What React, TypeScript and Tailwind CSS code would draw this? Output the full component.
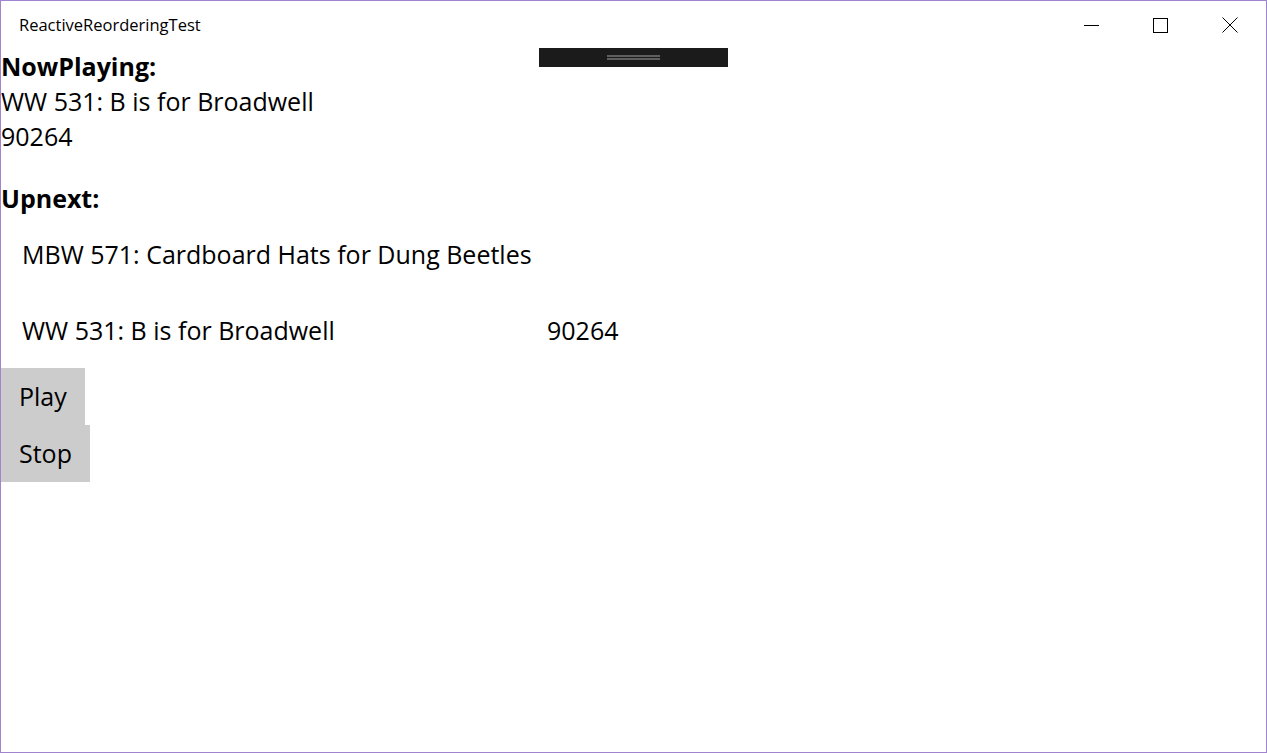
import React from "react";

export default function App() {
  return (
    <div className="relative w-[1267px] h-[753px] bg-white border border-[#a084cf] overflow-hidden text-black font-['Open_Sans',sans-serif]">
      {/* title bar */}
      <div className="flex h-[48px] items-center">
        <div className="pl-[18px] text-[16.5px] flex-1 pt-[1px]">ReactiveReorderingTest</div>
        <div className="flex h-full pr-[2px]">
          <div className="w-[69px] h-full flex items-center justify-center">
            <div className="w-[15px] h-px bg-black" />
          </div>
          <div className="w-[69px] h-full flex items-center justify-center">
            <div className="w-[15px] h-[15px] border border-black" />
          </div>
          <div className="w-[69px] h-full flex items-center justify-center">
            <svg width="16" height="16" viewBox="0 0 16 16">
              <path d="M0.5 0.5 L15.5 15.5 M15.5 0.5 L0.5 15.5" stroke="black" strokeWidth="1" />
            </svg>
          </div>
        </div>
      </div>

      {/* drag handle overlay */}
      <div className="absolute left-[538px] top-[47px] w-[189px] h-[19px] bg-[#1b1b1b] flex flex-col items-center justify-center gap-[1px]">
        <div className="w-[53px] h-[2px] bg-[#5e5e5e]" />
        <div className="w-[53px] h-[2px] bg-[#5e5e5e]" />
      </div>

      {/* content */}
      <div className="text-[25px] leading-[35px]">
        <div className="font-bold">NowPlaying:</div>
        <div>WW 531: B is for Broadwell</div>
        <div>90264</div>
        <div className="h-[27px]" />
        <div className="font-bold">Upnext:</div>
        <div className="flex flex-col">
          <div className="h-[76px] flex items-center pl-[21px]">MBW 571: Cardboard Hats for Dung Beetles</div>
          <div className="h-[76px] flex items-center pl-[21px]">
            <span className="w-[525px]">WW 531: B is for Broadwell</span>
            <span>90264</span>
          </div>
        </div>
        <div className="flex flex-col items-start">
          <button className="h-[57px] pl-[18px] pr-[18px] bg-[#cccccc] text-left">Play</button>
          <button className="h-[57px] pl-[18px] pr-[18px] bg-[#cccccc] text-left">Stop</button>
        </div>
      </div>
    </div>
  );
}
